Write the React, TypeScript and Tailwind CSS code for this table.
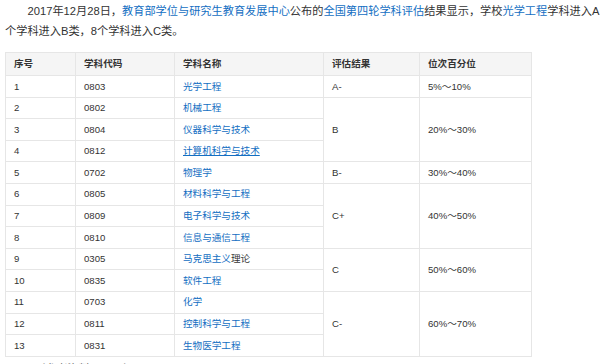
import React from 'react';

type Row = {
  no: string;
  code: string;
  name: React.ReactNode;
  grade?: { text: string; span: number; pct: string };
};

const link = 'text-[#136ec2]';

export default function App() {
  const rows: Row[] = [
    { no: '1', code: '0803', name: <span className={link}>光学工程</span>, grade: { text: 'A-', span: 1, pct: '5%～10%' } },
    { no: '2', code: '0802', name: <span className={link}>机械工程</span>, grade: { text: 'B', span: 3, pct: '20%～30%' } },
    { no: '3', code: '0804', name: <span className={link}>仪器科学与技术</span> },
    { no: '4', code: '0812', name: <span className={`${link} underline`}>计算机科学与技术</span> },
    { no: '5', code: '0702', name: <span className={link}>物理学</span>, grade: { text: 'B-', span: 1, pct: '30%～40%' } },
    { no: '6', code: '0805', name: <span className={link}>材料科学与工程</span>, grade: { text: 'C+', span: 3, pct: '40%～50%' } },
    { no: '7', code: '0809', name: <span className={link}>电子科学与技术</span> },
    { no: '8', code: '0810', name: <span className={link}>信息与通信工程</span> },
    {
      no: '9',
      code: '0305',
      name: (
        <>
          <span className={link}>马克思主义</span>理论
        </>
      ),
      grade: { text: 'C', span: 2, pct: '50%～60%' },
    },
    { no: '10', code: '0835', name: <span className={link}>软件工程</span> },
    { no: '11', code: '0703', name: <span className={link}>化学</span>, grade: { text: 'C-', span: 3, pct: '60%～70%' } },
    { no: '12', code: '0811', name: <span className={link}>控制科学与工程</span> },
    { no: '13', code: '0831', name: <span className={link}>生物医学工程</span> },
  ];

  const cell = 'border border-[#e6e6e6] px-[8px] text-left align-middle';

  return (
    <div
      className="w-[600px] h-[364px] overflow-hidden bg-white text-[#333]"
      style={{ fontFamily: '"Liberation Sans", "Noto Sans CJK SC", sans-serif' }}
    >
      <p className="pl-[5px] pt-[1px] text-[11.2px] leading-[20px] whitespace-nowrap">
        <span className="pl-[22.5px]">2017年12月28日，</span>
        <span className={link}>教育部学位与研究生教育发展中心</span>公布的
        <span className={link}>全国第四轮学科评估</span>结果显示，学校
        <span className={link}>光学工程</span>学科进入A
        <br />
        个学科进入B类，8个学科进入C类。
      </p>

      <table className="ml-[5px] mt-[11px] border-collapse text-[9.6px] leading-none">
        <colgroup>
          <col className="w-[70px]" />
          <col className="w-[99px]" />
          <col className="w-[149px]" />
          <col className="w-[96px]" />
          <col className="w-[112px]" />
        </colgroup>
        <thead>
          <tr className="h-[23px] bg-[#f5f5f5] font-bold">
            <th className={cell}>序号</th>
            <th className={cell}>学科代码</th>
            <th className={cell}>学科名称</th>
            <th className={cell}>评估结果</th>
            <th className={cell}>位次百分位</th>
          </tr>
        </thead>
        <tbody>
          {rows.map((r) => (
            <tr key={r.no} className="h-[21.6px]">
              <td className={cell}>{r.no}</td>
              <td className={cell}>{r.code}</td>
              <td className={cell}>{r.name}</td>
              {r.grade && (
                <>
                  <td className={cell} rowSpan={r.grade.span}>
                    {r.grade.text}
                  </td>
                  <td className={cell} rowSpan={r.grade.span}>
                    {r.grade.pct}
                  </td>
                </>
              )}
            </tr>
          ))}
        </tbody>
      </table>

      <p className="pl-[34px] pt-[2px] text-[11.2px] leading-[20px] text-[#666]">
        （参考资料：<span className={link}>[3-4]</span>）
      </p>
    </div>
  );
}
